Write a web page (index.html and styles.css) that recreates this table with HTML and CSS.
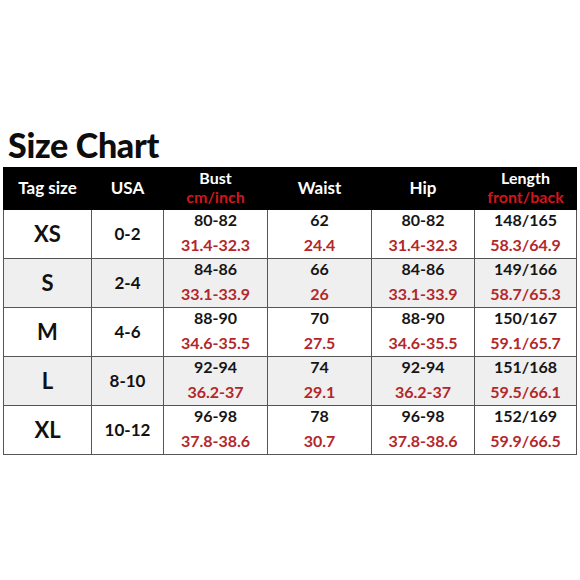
FILE: index.html
```html
<!DOCTYPE html>
<html>
<head>
<meta charset="utf-8">
<link rel="stylesheet" href="styles.css">
</head>
<body>
<div class="page">
  <h1 class="title">Size Chart</h1>
  <table class="chart">
    <colgroup>
      <col class="c1"><col class="c2"><col class="c3"><col class="c4"><col class="c5"><col class="c6">
    </colgroup>
    <thead>
      <tr>
        <th class="big">Tag size</th>
        <th class="big">USA</th>
        <th><span class="hl">Bust</span><span class="hr">cm/inch</span></th>
        <th class="big">Waist</th>
        <th class="big">Hip</th>
        <th><span class="hl">Length</span><span class="hr">front/back</span></th>
      </tr>
    </thead>
    <tbody>
      <tr>
        <td class="tag">XS</td><td class="usa">0-2</td>
        <td><span class="cm">80-82</span><span class="in">31.4-32.3</span></td>
        <td><span class="cm">62</span><span class="in">24.4</span></td>
        <td><span class="cm">80-82</span><span class="in">31.4-32.3</span></td>
        <td><span class="cm">148/165</span><span class="in">58.3/64.9</span></td>
      </tr>
      <tr class="alt">
        <td class="tag">S</td><td class="usa">2-4</td>
        <td><span class="cm">84-86</span><span class="in">33.1-33.9</span></td>
        <td><span class="cm">66</span><span class="in">26</span></td>
        <td><span class="cm">84-86</span><span class="in">33.1-33.9</span></td>
        <td><span class="cm">149/166</span><span class="in">58.7/65.3</span></td>
      </tr>
      <tr>
        <td class="tag">M</td><td class="usa">4-6</td>
        <td><span class="cm">88-90</span><span class="in">34.6-35.5</span></td>
        <td><span class="cm">70</span><span class="in">27.5</span></td>
        <td><span class="cm">88-90</span><span class="in">34.6-35.5</span></td>
        <td><span class="cm">150/167</span><span class="in">59.1/65.7</span></td>
      </tr>
      <tr class="alt">
        <td class="tag">L</td><td class="usa">8-10</td>
        <td><span class="cm">92-94</span><span class="in">36.2-37</span></td>
        <td><span class="cm">74</span><span class="in">29.1</span></td>
        <td><span class="cm">92-94</span><span class="in">36.2-37</span></td>
        <td><span class="cm">151/168</span><span class="in">59.5/66.1</span></td>
      </tr>
      <tr>
        <td class="tag">XL</td><td class="usa">10-12</td>
        <td><span class="cm">96-98</span><span class="in">37.8-38.6</span></td>
        <td><span class="cm">78</span><span class="in">30.7</span></td>
        <td><span class="cm">96-98</span><span class="in">37.8-38.6</span></td>
        <td><span class="cm">152/169</span><span class="in">59.9/66.5</span></td>
      </tr>
    </tbody>
  </table>
</div>
</body>
</html>
```
FILE: styles.css
```css
html, body {
  margin: 0;
  padding: 0;
  background: #ffffff;
}
.page {
  width: 580px;
  height: 580px;
  padding: 126px 0 0 3px;
  box-sizing: border-box;
  font-family: "Lato", "Open Sans", sans-serif;
  color: #111;
}
.title {
  margin: 0 0 0 5px;
  height: 41px;
  font-size: 34px;
  line-height: 38px;
  font-weight: 900;
  color: #0d0d0d;
  letter-spacing: -0.3px;
}
.chart {
  border-collapse: collapse;
  table-layout: fixed;
  width: 573px;
}
.c1 { width: 88px; }
.c2 { width: 72px; }
.c3 { width: 104px; }
.c4 { width: 104px; }
.c5 { width: 103px; }
.c6 { width: 102px; }
.chart th {
  background: #000;
  color: #fff;
  height: 37px;
  padding: 0 0 3px;
  font-size: 16px;
  font-weight: 700;
  text-align: center;
  vertical-align: middle;
  border: 1px solid #000;
  line-height: 19px;
}
.chart th.big {
  font-size: 17px;
}
.hl, .hr, .cm, .in {
  display: block;
}
.hr {
  color: #d0151b;
}
.chart td {
  height: 44px;
  padding: 0 0 4px;
  border: 1px solid #555;
  text-align: center;
  vertical-align: middle;
  font-weight: 700;
  font-size: 16px;
  line-height: 18px;
}
.in {
  margin-top: 7px;
}
.alt td {
  background: #efefef;
}
.chart td.tag {
  font-size: 22px;
  padding: 1px 0 2px;
}
.chart td.usa {
  font-size: 17px;
  padding: 1px 0 2px;
}
.cm {
  color: #151515;
}
.in {
  color: #b3272a;
}
```
